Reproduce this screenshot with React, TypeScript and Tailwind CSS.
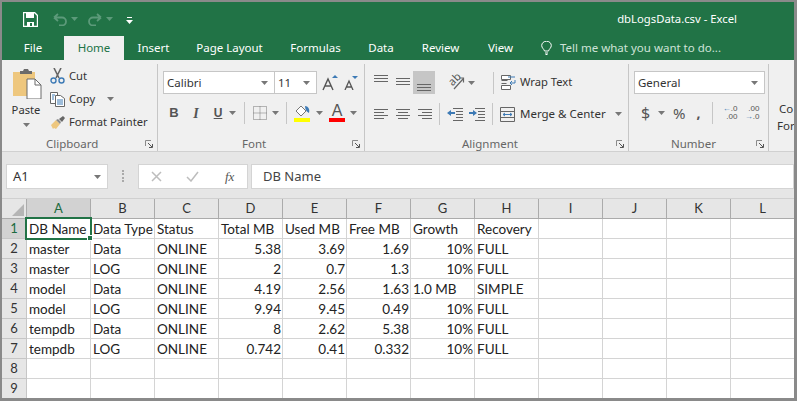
import type { ReactNode } from "react"

const ui = "font-['Noto_Sans',sans-serif]"
const cellFont = "font-['Lato',sans-serif]"

const rows: string[][] = [
  ["DB Name", "Data Type", "Status", "Total MB", "Used MB", "Free MB", "Growth", "Recovery"],
  ["master", "Data", "ONLINE", "5.38", "3.69", "1.69", "10%", "FULL"],
  ["master", "LOG", "ONLINE", "2", "0.7", "1.3", "10%", "FULL"],
  ["model", "Data", "ONLINE", "4.19", "2.56", "1.63", "1.0 MB", "SIMPLE"],
  ["model", "LOG", "ONLINE", "9.94", "9.45", "0.49", "10%", "FULL"],
  ["tempdb", "Data", "ONLINE", "8", "2.62", "5.38", "10%", "FULL"],
  ["tempdb", "LOG", "ONLINE", "0.742", "0.41", "0.332", "10%", "FULL"],
  [],
  [],
]
const columns = ["A", "B", "C", "D", "E", "F", "G", "H", "I", "J", "K", "L"]
const tabs = [
  { label: "Insert", width: "w-[59px]" },
  { label: "Page Layout", width: "w-[93px]" },
  { label: "Formulas", width: "w-[79px]" },
  { label: "Data", width: "w-[52px]" },
  { label: "Review", width: "w-[67px]" },
  { label: "View", width: "w-[53px]" },
]

function Caret({ className = "", color = "#777" }: { className?: string; color?: string }) {
  return (
    <svg width="7" height="4" viewBox="0 0 7 4" className={`shrink-0 ${className}`}>
      <path d="M0 0h7L3.5 4z" fill={color} />
    </svg>
  )
}

function Launcher() {
  return (
    <svg width="9" height="9" viewBox="0 0 9 9" className="shrink-0">
      <path d="M.5 6V.5H6" fill="none" stroke="#8a8a8a" />
      <path d="M3 3l4 4M7.500 4v3.500H4" fill="none" stroke="#555" />
    </svg>
  )
}

function Sep() {
  return <div className="w-px h-[22px] bg-[#c6c6c6] shrink-0" />
}

function Lines({ rows: lineRows }: { rows: number[][] }) {
  return (
    <svg width="16" height="15" viewBox="0 0 16 15" className="shrink-0">
      {lineRows.map(([x1, x2, y]) => (
        <path key={y} d={`M${x1} ${y + 0.5}H${x2}`} stroke="#666" />
      ))}
    </svg>
  )
}

function Combo({ text, width, className = "" }: { text: string; width: string; className?: string }) {
  return (
    <div className={`${width} h-[23px] bg-white border border-[#c6c6c6] flex items-center justify-between pl-[3px] pr-[6px] shrink-0 ${className}`}>
      <span className={`${ui} text-[11.5px] text-[#333]`}>{text}</span>
      <Caret />
    </div>
  )
}

function Group({ width, label, labelClass, children }: { width: string; label: string; labelClass: string; children: ReactNode }) {
  return (
    <div className={`${width} h-[88px] shrink-0 flex flex-col border-r border-[#c6c6c6]`}>
      <div className="h-[72px]">{children}</div>
      <div className="h-[16px] flex items-center">
        <span className={`${ui} text-[11.5px] text-[#666] ${labelClass}`}>{label}</span>
        <div className="ml-auto mr-[3px]">
          <Launcher />
        </div>
      </div>
    </div>
  )
}

function ClipboardGroup() {
  return (
    <Group width="w-[156px]" label="Clipboard" labelClass="ml-[44px]">
      <div className="flex pt-[4px]">
        <div className="w-[48px] flex flex-col items-center">
          <svg width="30" height="31" viewBox="0 0 30 31" className="ml-[1px]">
            <path d="M1 4h22v24H1z" fill="#eec77e" />
            <path d="M8 3h3l1-2h4l1 2h3v3H8z" fill="#6b6b6b" />
            <path d="M15 11h8l6 6v14H15z" fill="#fff" stroke="#6b6b6b" />
            <path d="M23 11v6h6" fill="none" stroke="#6b6b6b" />
          </svg>
          <span className={`${ui} text-[11.2px] text-[#333] mt-[3px] leading-[16px]`}>Paste</span>
          <Caret className="mt-[5px]" />
        </div>
        <div className="flex flex-col gap-[5px] -mt-[1px]">
          <div className="flex items-center gap-[4px] h-[18px]">
            <svg width="15" height="16" viewBox="0 0 15 16" className="shrink-0">
              <path d="M4 0l5 10M11 0L6 10" stroke="#666" strokeWidth="1.6" fill="none" />
              <circle cx="3.500" cy="12.500" r="2.500" fill="none" stroke="#3d7ab5" strokeWidth="1.400" />
              <circle cx="11.500" cy="12.500" r="2.500" fill="none" stroke="#3d7ab5" strokeWidth="1.400" />
            </svg>
            <span className={`${ui} text-[11.2px] text-[#333]`}>Cut</span>
          </div>
          <div className="flex items-center gap-[4px] h-[18px]">
            <svg width="15" height="15" viewBox="0 0 15 15" className="shrink-0">
              <path d="M.5.5h7v11h-7z" fill="#fff" stroke="#666" />
              <path d="M5.500 3.500h5l4 3v8h-9z" fill="#fff" stroke="#666" />
              <path d="M7 8h6M7 10h6M7 12h6M2 3h3M2 5h2M2 7h2" stroke="#3d7ab5" />
            </svg>
            <span className={`${ui} text-[11.2px] text-[#333]`}>Copy</span>
            <Caret className="ml-[8px]" />
          </div>
          <div className="flex items-center gap-[3px] h-[18px]">
            <svg width="16" height="15" viewBox="0 0 16 15" className="shrink-0">
              <path d="M1 10l5-5 4 4-4 5-2-1-1 1z" fill="#eec77e" />
              <path d="M6 5l2-1 3 3-1 2z" fill="#8a8a8a" />
              <path d="M9 4l4-3 2 2-3 4z" fill="#666" />
            </svg>
            <span className={`${ui} text-[11.2px] text-[#333]`}>Format Painter</span>
          </div>
        </div>
      </div>
    </Group>
  )
}

function FontGroup() {
  return (
    <Group width="w-[207px]" label="Font" labelClass="ml-[84px]">
      <div className="flex items-center pt-[7px] pl-[5px]">
        <Combo text="Calibri" width="w-[112px]" />
        <Combo text="11" width="w-[43px]" className="-ml-px" />
        <svg width="16" height="16" viewBox="0 0 16 16" className="ml-[5px]">
          <path d="M1 15L6 4l5 11M3 11h6" fill="none" stroke="#555" strokeWidth="1.4" />
          <path d="M10 3l3-3 3 3z" fill="#3d7ab5" />
        </svg>
        <svg width="14" height="14" viewBox="0 0 14 14" className="ml-[6px] mt-[1px]">
          <path d="M1 14L5 5l4 9M2.500 11h5" fill="none" stroke="#555" strokeWidth="1.3" />
          <path d="M8 0h6l-3 3z" fill="#3d7ab5" />
        </svg>
      </div>
      <div className="flex items-center h-[22px] mt-[8px]">
        <span className="ml-[10px] w-[12px] font-['Liberation_Sans',sans-serif] font-bold text-[13px] text-[#555] text-center">B</span>
        <span className="ml-[10px] w-[12px] font-['Liberation_Serif',serif] italic font-bold text-[14px] text-[#555] text-center">I</span>
        <span className="ml-[10px] w-[12px] font-['Liberation_Sans',sans-serif] font-bold text-[12px] text-[#555] text-center underline">U</span>
        <Caret className="ml-[5px]" />
        <div className="ml-[8px]"><Sep /></div>
        <svg width="14" height="14" viewBox="0 0 14 14" className="ml-[8px]">
          <path d="M.5.5h13v13H.5z" fill="none" stroke="#777" strokeDasharray="1 1" />
          <path d="M7 .5v13M.5 7h13" stroke="#777" strokeDasharray="1 1" />
        </svg>
        <Caret className="ml-[5px]" />
        <div className="ml-[7px]"><Sep /></div>
        <svg width="17" height="18" viewBox="0 0 17 18" className="ml-[7px]">
          <path d="M2 7l5-5 5 5-5 5z" fill="#fff" stroke="#777" />
          <path d="M11 2c3 0 5 3 4 7-2-1-4-3-4-7z" fill="#3d7ab5" />
          <path d="M0 14h16v4H0z" fill="#ffff00" />
        </svg>
        <Caret className="ml-[5px]" />
        <div className="ml-[6px] flex flex-col items-center w-[16px]">
          <span className="font-['Liberation_Sans',sans-serif] text-[16px] leading-[14px] text-[#555]">A</span>
          <div className="w-[16px] h-[4px] bg-[#ff0000]" />
        </div>
        <Caret className="ml-[5px]" />
      </div>
    </Group>
  )
}

function AlignmentGroup() {
  return (
    <Group width="w-[264px]" label="Alignment" labelClass="ml-[97px]">
      <div className="flex items-center pt-[7px] h-[30px]">
        <div className="ml-[8px]">
          <Lines rows={[[1, 15, 0], [1, 15, 3], [1, 15, 6]]} />
        </div>
        <div className="ml-[6px]">
          <Lines rows={[[1, 15, 3], [1, 15, 6], [1, 15, 9]]} />
        </div>
        <div className="ml-[2px] w-[22px] h-[23px] bg-[#c6c6c6] flex items-center justify-center pt-[4px]">
          <Lines rows={[[1, 15, 7], [1, 15, 10], [1, 15, 13]]} />
        </div>
        <div className="ml-[13px] w-[17px] h-[17px] relative shrink-0">
          <span className={`${ui} absolute left-0 -top-[3px] text-[11px] text-[#555] -rotate-45`}>ab</span>
          <svg width="17" height="17" viewBox="0 0 17 17" className="absolute left-0 top-0">
            <path d="M6 15L15 5M11 4h4.500v4.500" fill="none" stroke="#666" strokeWidth="1.200" />
          </svg>
        </div>
        <Caret className="ml-[3px]" />
        <div className="ml-[18px]"><Sep /></div>
        <svg width="15" height="16" viewBox="0 0 15 16" className="ml-[7px]">
          <path d="M.5.5h9v4h-9zM.5 10.500h9v4h-9z" fill="#fff" stroke="#666" />
          <path d="M.5 5.500h6M.5 8.500h5" stroke="#666" />
          <path d="M7 2h7M14 5v3H9l2-2M9 8l2 2" fill="none" stroke="#3d7ab5" />
        </svg>
        <span className={`${ui} text-[11.2px] text-[#333] ml-[4px]`}>Wrap Text</span>
      </div>
      <div className="flex items-center h-[22px] mt-[9px]">
        <div className="ml-[8px]">
          <Lines rows={[[1, 15, 2], [1, 11, 5], [1, 15, 8], [1, 11, 11]]} />
        </div>
        <div className="ml-[6px]">
          <Lines rows={[[1, 15, 2], [3, 13, 5], [1, 15, 8], [3, 13, 11]]} />
        </div>
        <div className="ml-[6px]">
          <Lines rows={[[1, 15, 2], [5, 15, 5], [1, 15, 8], [5, 15, 11]]} />
        </div>
        <div className="ml-[6px]"><Sep /></div>
        <svg width="16" height="14" viewBox="0 0 16 14" className="ml-[7px]">
          <path d="M6 1.500h10M9 4.500h7M9 7.500h7M9 10.500h7M6 13.500h10" stroke="#666" />
          <path d="M0 6l4-3v2h4v2H4v2z" fill="#3d7ab5" />
        </svg>
        <svg width="16" height="14" viewBox="0 0 16 14" className="ml-[6px]">
          <path d="M6 1.500h10M9 4.500h7M9 7.500h7M9 10.500h7M6 13.500h10" stroke="#666" />
          <path d="M8 6L4 3v2H0v2h4v2z" fill="#3d7ab5" />
        </svg>
        <div className="ml-[7px]"><Sep /></div>
        <svg width="15" height="15" viewBox="0 0 15 15" className="ml-[7px]">
          <path d="M.5.5h14v14H.5zM.5 4.500h14M.5 10.500h14" fill="none" stroke="#666" />
          <path d="M3 7.500h9M3 7.500l2-1.500M3 7.500L5 9M12 7.500L10 6M12 7.500L10 9" fill="none" stroke="#3d7ab5" />
        </svg>
        <span className={`${ui} text-[11.5px] text-[#333] ml-[5px]`}>Merge &amp; Center</span>
        <Caret className="ml-[9px]" />
      </div>
    </Group>
  )
}

function NumberGroup() {
  return (
    <Group width="w-[140px]" label="Number" labelClass="ml-[42px]">
      <div className="pt-[7px] pl-[5px]">
        <Combo text="General" width="w-[131px]" />
      </div>
      <div className="flex items-center h-[22px] mt-[8px]">
        <span className={`${ui} text-[16px] text-[#555] ml-[12px] w-[9px] leading-none`}>$</span>
        <Caret className="ml-[8px]" />
        <span className={`${ui} text-[15px] text-[#555] ml-[8px] leading-none`}>%</span>
        <span className={`${ui} font-bold text-[14px] text-[#555] ml-[11px] w-[6px] leading-none`}>,</span>
        <div className="ml-[10px]"><Sep /></div>
        <div className="ml-[7px] w-[17px] flex flex-col font-['Liberation_Sans',sans-serif] text-[8px] leading-[8px] text-[#555] text-right">
          <span><span className="text-[#3d7ab5]">←</span>.0</span>
          <span>.00</span>
        </div>
        <div className="ml-[5px] w-[17px] flex flex-col font-['Liberation_Sans',sans-serif] text-[8px] leading-[8px] text-[#555] text-right">
          <span>.00</span>
          <span><span className="text-[#3d7ab5]">→</span>.0</span>
        </div>
      </div>
    </Group>
  )
}

function Grid() {
  return (
    <div className={`relative flex flex-col bg-white ${cellFont} text-[13.5px] text-[#222]`}>
      <div className="flex h-[20px] bg-[#e6e6e6]">
        <div className="w-[25px] shrink-0 flex items-end justify-end border-r border-b border-[#ababab] pr-[2px] pb-[2px]">
          <svg width="12" height="12" viewBox="0 0 12 12"><path d="M12 0v12H0z" fill="#b5b5b5" /></svg>
        </div>
        {columns.map((c, i) => (
          <div
            key={c}
            className={`w-[64px] shrink-0 flex items-center justify-center border-r border-b border-[#ababab] text-[13px] ${i === 0 ? "bg-[#d2d2d2] text-[#1c6b40]" : "text-[#333]"}`}
          >
            {c}
          </div>
        ))}
      </div>
      {rows.map((row, r) => (
        <div key={r} className="flex h-[20px]">
          <div className={`w-[25px] shrink-0 flex items-center justify-center border-r border-b border-[#c6c6c6] text-[13px] ${r === 0 ? "bg-[#d2d2d2] text-[#1c6b40]" : "bg-[#e6e6e6] text-[#333]"}`}>
            {r + 1}
          </div>
          {columns.map((_, c) => {
            const value = row[c] ?? ""
            const numeric = /^[\d.]+%?$/.test(value)
            return (
              <div
                key={c}
                className={`w-[64px] shrink-0 border-r border-b border-[#d4d4d4] pl-[2px] pr-px leading-[21px] whitespace-nowrap overflow-hidden ${numeric ? "text-right" : "text-left"}`}
              >
                {value}
              </div>
            )
          })}
        </div>
      ))}
      <div className="absolute left-[23px] top-[18px] w-[67px] h-[23px] border-2 border-[#217346]">
        <div className="absolute -right-[3px] -bottom-[3px] w-[6px] h-[6px] bg-[#217346] border border-white" />
      </div>
    </div>
  )
}

export default function App() {
  return (
    <div className="w-[797px] h-[401px] overflow-hidden bg-white border-t-2 border-l-2 border-r-[3px] border-b-[3px] border-[#8a8a8a] flex flex-col">
      <div className="h-[34px] shrink-0 bg-[#217346] flex items-center">
        <svg width="15" height="15" viewBox="0 0 15 15" className="ml-[21px]">
          <path d="M.5.5h11l3 3v11H.5z" fill="none" stroke="#fff" strokeWidth="1.4" />
          <path d="M3 1h8v5H3zM4 10h7v4H4z" fill="#fff" />
          <path d="M7 11h2v3H7z" fill="#217346" />
        </svg>
        <svg width="14" height="13" viewBox="0 0 14 13" className="ml-[15px]">
          <path d="M1 4.500h8a4 4 0 010 8H6M1 4.500L5 1M1 4.500L5 8" fill="none" stroke="#5c9a7a" strokeWidth="1.8" />
        </svg>
        <Caret className="ml-[4px]" color="#5c9a7a" />
        <svg width="14" height="13" viewBox="0 0 14 13" className="ml-[10px]">
          <path d="M13 4.500H5a4 4 0 000 8h3M13 4.500L9 1M13 4.500L9 8" fill="none" stroke="#5c9a7a" strokeWidth="1.8" />
        </svg>
        <Caret className="ml-[4px]" color="#5c9a7a" />
        <svg width="7" height="7" viewBox="0 0 7 7" className="ml-[13px] mt-[2px]">
          <path d="M1 .5h5" stroke="#fff" />
          <path d="M0 3h7L3.500 7z" fill="#fff" />
        </svg>
        <span className={`${ui} text-[11.3px] text-white ml-auto mr-[57px]`}>dbLogsData.csv - Excel</span>
      </div>

      <div className={`h-[24px] shrink-0 bg-[#217346] flex items-center ${ui} text-[11.5px] text-white`}>
        <div className="w-[62px] text-center">File</div>
        <div className="w-[60px] h-full bg-[#f0f0f0] text-[#217346] flex items-center justify-center">Home</div>
        {tabs.map((t) => (
          <div key={t.label} className={`${t.width} text-center`}>{t.label}</div>
        ))}
        <svg width="11" height="14" viewBox="0 0 11 14" className="ml-[14px]">
          <path d="M3.500 10C3 8 .7 7 .7 4.500a4.800 4.300 0 019.600 0C10.300 7 8 8 7.500 10zM4 12h3M4.500 13.500h2" fill="none" stroke="#fff" />
        </svg>
        <span className="ml-[8px] text-[#cfe3d8]">Tell me what you want to do...</span>
      </div>

      <div className="h-[92px] shrink-0 bg-[#f0f0f0] flex pt-[4px] overflow-hidden border-b border-[#d0d0d0]">
        <ClipboardGroup />
        <FontGroup />
        <AlignmentGroup />
        <NumberGroup />
        <div className={`pl-[8px] ${ui} text-[11.5px] leading-[17px] text-[#333] pt-[36px] whitespace-nowrap`}>
          <div className="pl-[2px]">Co</div>
          <div>For</div>
        </div>
      </div>

      <div className="h-[47px] shrink-0 bg-[#e6e6e6] flex items-start pt-[12px] border-b border-[#d0d0d0]">
        <div className="ml-[4px] w-[102px] h-[25px] bg-white border border-[#d4d4d4] flex items-center justify-between pl-[6px] pr-[6px]">
          <span className={`${ui} text-[13px] text-[#333]`}>A1</span>
          <Caret />
        </div>
        <div className="ml-[14px] w-[3px] h-[12px] mt-[6px] border-l-2 border-dotted border-[#aaa]" />
        <div className="ml-[13px] w-[110px] h-[25px] bg-white border border-[#d4d4d4] flex items-center">
          <svg width="11" height="11" viewBox="0 0 11 11" className="ml-[12px]">
            <path d="M1 1l9 9M10 1l-9 9" stroke="#bdbdbd" strokeWidth="1.5" />
          </svg>
          <svg width="13" height="11" viewBox="0 0 13 11" className="ml-[24px]">
            <path d="M1 6l4 4 7-9" fill="none" stroke="#bdbdbd" strokeWidth="1.5" />
          </svg>
          <span className="ml-[26px] font-['Liberation_Serif',serif] italic text-[13px] text-[#555]">fx</span>
        </div>
        <div className={`ml-[3px] flex-1 h-[25px] bg-white border border-[#d4d4d4] flex items-center pl-[11px] ${ui} text-[13px] text-[#444]`}>
          DB Name
        </div>
      </div>

      <Grid />
    </div>
  )
}
